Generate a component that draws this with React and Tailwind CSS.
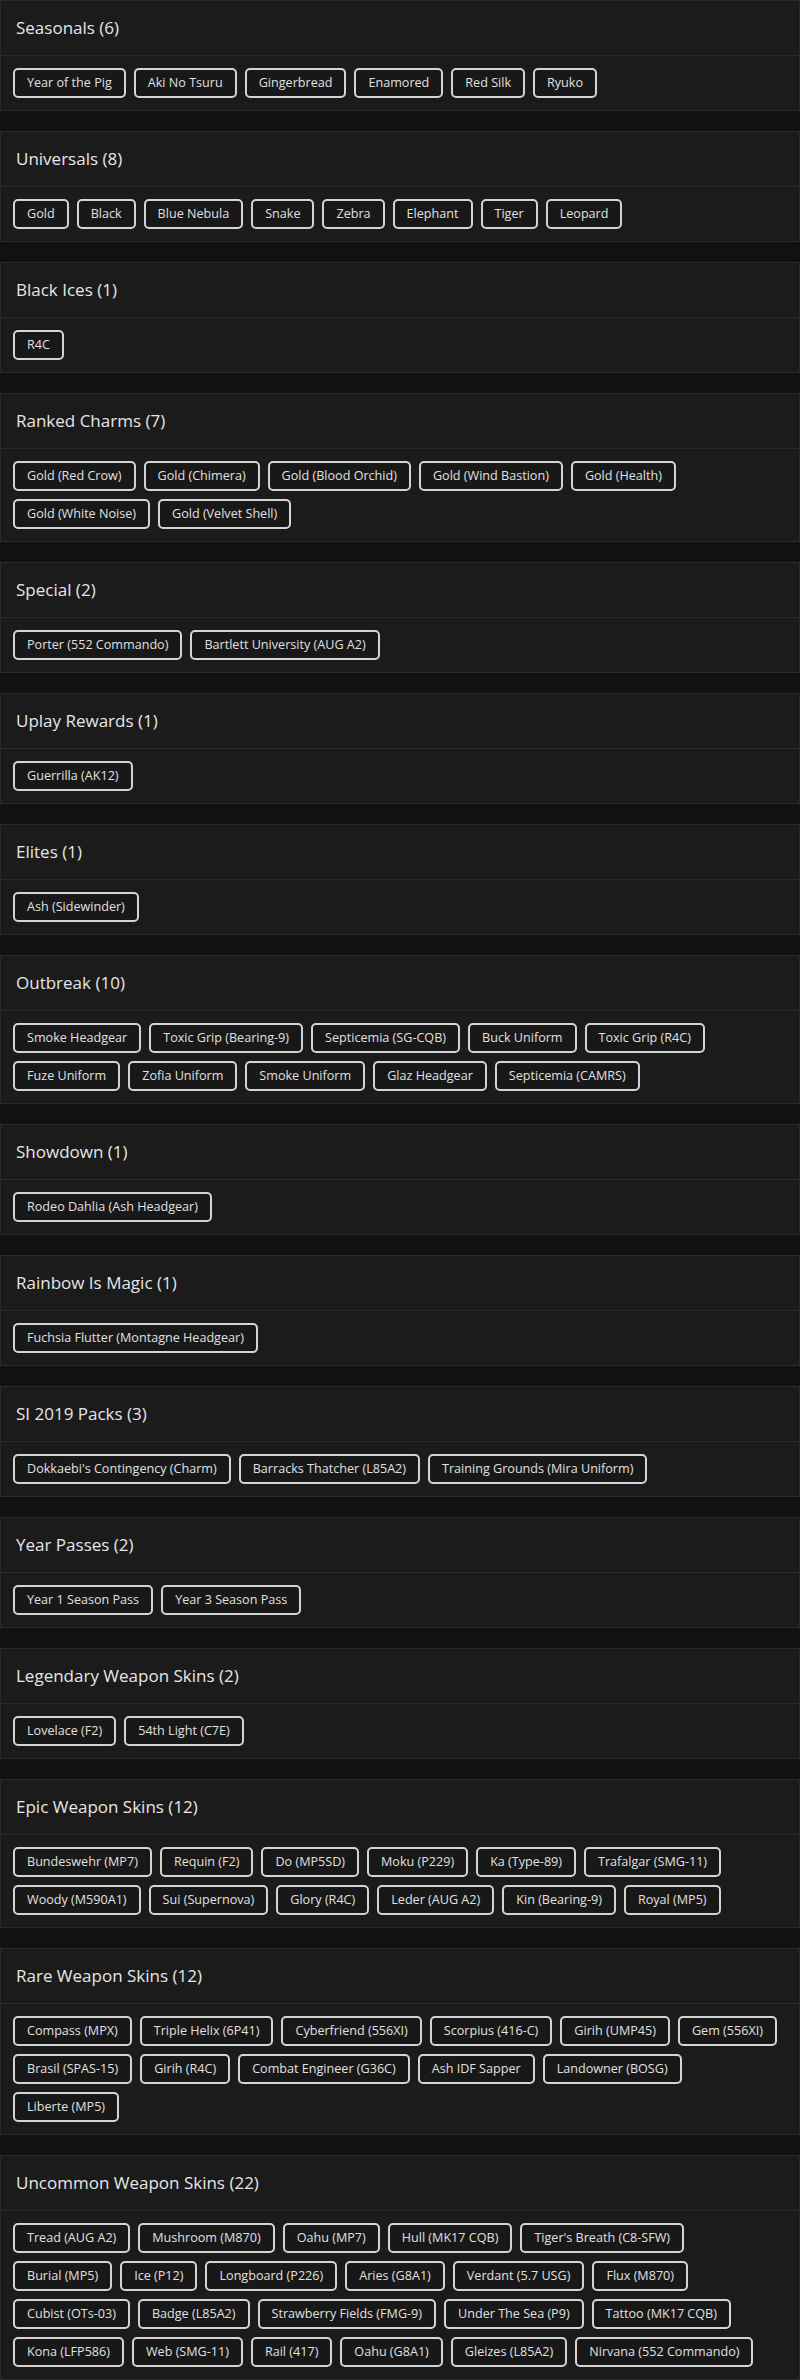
const sections = [
  ["Seasonals", ["Year of the Pig", "Aki No Tsuru", "Gingerbread", "Enamored", "Red Silk", "Ryuko"]],
  ["Universals", ["Gold", "Black", "Blue Nebula", "Snake", "Zebra", "Elephant", "Tiger", "Leopard"]],
  ["Black Ices", ["R4C"]],
  ["Ranked Charms", ["Gold (Red Crow)", "Gold (Chimera)", "Gold (Blood Orchid)", "Gold (Wind Bastion)", "Gold (Health)", "Gold (White Noise)", "Gold (Velvet Shell)"]],
  ["Special", ["Porter (552 Commando)", "Bartlett University (AUG A2)"]],
  ["Uplay Rewards", ["Guerrilla (AK12)"]],
  ["Elites", ["Ash (Sidewinder)"]],
  ["Outbreak", ["Smoke Headgear", "Toxic Grip (Bearing-9)", "Septicemia (SG-CQB)", "Buck Uniform", "Toxic Grip (R4C)", "Fuze Uniform", "Zofia Uniform", "Smoke Uniform", "Glaz Headgear", "Septicemia (CAMRS)"]],
  ["Showdown", ["Rodeo Dahlia (Ash Headgear)"]],
  ["Rainbow Is Magic", ["Fuchsia Flutter (Montagne Headgear)"]],
  ["SI 2019 Packs", ["Dokkaebi's Contingency (Charm)", "Barracks Thatcher (L85A2)", "Training Grounds (Mira Uniform)"]],
  ["Year Passes", ["Year 1 Season Pass", "Year 3 Season Pass"]],
  ["Legendary Weapon Skins", ["Lovelace (F2)", "54th Light (C7E)"]],
  ["Epic Weapon Skins", ["Bundeswehr (MP7)", "Requin (F2)", "Do (MP5SD)", "Moku (P229)", "Ka (Type-89)", "Trafalgar (SMG-11)", "Woody (M590A1)", "Sui (Supernova)", "Glory (R4C)", "Leder (AUG A2)", "Kin (Bearing-9)", "Royal (MP5)"]],
  ["Rare Weapon Skins", ["Compass (MPX)", "Triple Helix (6P41)", "Cyberfriend (556XI)", "Scorpius (416-C)", "Girih (UMP45)", "Gem (556XI)", "Brasil (SPAS-15)", "Girih (R4C)", "Combat Engineer (G36C)", "Ash IDF Sapper", "Landowner (BOSG)", "Liberte (MP5)"]],
  ["Uncommon Weapon Skins", ["Tread (AUG A2)", "Mushroom (M870)", "Oahu (MP7)", "Hull (MK17 CQB)", "Tiger's Breath (C8-SFW)", "Burial (MP5)", "Ice (P12)", "Longboard (P226)", "Aries (G8A1)", "Verdant (5.7 USG)", "Flux (M870)", "Cubist (OTs-03)", "Badge (L85A2)", "Strawberry Fields (FMG-9)", "Under The Sea (P9)", "Tattoo (MK17 CQB)", "Kona (LFP586)", "Web (SMG-11)", "Rail (417)", "Oahu (G8A1)", "Gleizes (L85A2)", "Nirvana (552 Commando)"]],
];

export default function App() {
  return (
    <div className="bg-[#111111] flex flex-col gap-5 min-h-[2380px]" style={{ fontFamily: '"Open Sans", "Noto Sans", sans-serif' }}>
      {sections.map(([title, items]) => (
        <div key={title} className="border border-[#2a2a2a] bg-[#1b1b1b]">
          <div className="h-[55px] px-[15px] flex items-center border-b border-[#2a2a2a] text-[17px] text-[#e6e6e6]">
            {title} ({items.length})
          </div>
          <div className="p-3 flex flex-wrap gap-2">
            {items.map((it, i) => (
              <div key={i} className="h-[30px] px-3 flex items-center border-2 border-[#d4d4d4] rounded-[5px] bg-[#181818] text-[12.6px] text-[#e0e0e0] whitespace-nowrap">
                {it}
              </div>
            ))}
          </div>
        </div>
      ))}
    </div>
  );
}
